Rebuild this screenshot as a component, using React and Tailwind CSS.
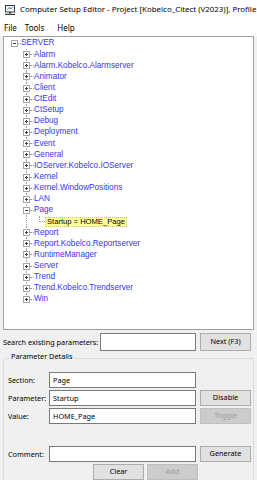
import React from 'react';

const items = [
  'Alarm',
  'Alarm.Kobelco.Alarmserver',
  'Animator',
  'Client',
  'CtEdit',
  'CtSetup',
  'Debug',
  'Deployment',
  'Event',
  'General',
  'IOServer.Kobelco.IOServer',
  'Kernel',
  'Kernel.WindowPositions',
  'LAN',
  'Page',
  'Report',
  'Report.Kobelco.Reportserver',
  'RuntimeManager',
  'Server',
  'Trend',
  'Trend.Kobelco.Trendserver',
  'Win',
];

const ExpandBox = ({ open }) => (
  <div className="relative z-10 w-[7px] h-[7px] border border-[#a5a5a5] bg-white flex items-center justify-center">
    <div className="absolute w-[3px] h-px bg-[#3b3b3b]" />
    {!open && <div className="absolute w-px h-[3px] bg-[#3b3b3b]" />}
  </div>
);

const TreeRow = ({ label, open, last }) => (
  <div className="flex items-center h-[11.13px]">
    <div className="w-[19px] shrink-0" />
    <div className="relative w-[7px] h-full flex items-center shrink-0">
      <div
        className={`absolute left-[3px] top-0 w-0 border-l border-dotted border-[#a0a0a0] ${
          last ? 'h-1/2' : 'h-full'
        }`}
      />
      <ExpandBox open={open} />
    </div>
    <div className="w-[4px] border-t border-dotted border-[#a0a0a0]" />
    <span className="text-[#3535f2] whitespace-nowrap">{label}</span>
  </div>
);

const Btn = ({ children, disabled }) => (
  <button
    className={`w-[51px] h-[16px] flex items-center justify-center border text-[7.3px] leading-none ${
      disabled
        ? 'bg-[#cccccc] border-[#bfbfbf] text-[#9a9a9a]'
        : 'bg-[#e1e1e1] border-[#adadad] text-black'
    }`}
  >
    {children}
  </button>
);

const Field = ({ label, value, children }) => (
  <div className="flex items-center h-[16px]">
    <span className="w-[41px] shrink-0">{label}</span>
    <div className="w-[147px] h-[16px] border border-[#7a7a7a] bg-white flex items-center px-[3px] shrink-0">
      {value}
    </div>
    <div className="ml-[4px]">{children}</div>
  </div>
);

export default function App() {
  return (
    <div
      className="w-[257px] h-[480px] bg-[#f0f0f0] overflow-hidden flex flex-col text-[7.3px] text-black"
      style={{ fontFamily: '"Noto Sans", "Open Sans", sans-serif' }}
    >
      {/* title bar */}
      <div className="h-[20px] bg-white flex items-center shrink-0 whitespace-nowrap overflow-hidden">
        <svg className="ml-[5px] shrink-0" width="10" height="10" viewBox="0 0 10 10">
          <rect x="0.5" y="0.5" width="9" height="6.5" fill="#f4f4f4" stroke="#3a3a3a" />
          <path d="M2.5 4.5 L4 2.5 L6 4 L7.5 2" fill="none" stroke="#2f6fb0" strokeWidth="0.9" />
          <rect x="4" y="7" width="2" height="1.5" fill="#3a3a3a" />
          <rect x="0" y="8.8" width="10" height="1.2" fill="#3a3a3a" />
        </svg>
        <span className="ml-[5px] text-[7.9px]">
          Computer Setup Editor - Project [Kobelco_Citect (V2023)], Profile
        </span>
      </div>

      {/* menu */}
      <div className="h-[16px] bg-white flex items-center shrink-0 text-[8px]">
        <span className="ml-[4px]">File</span>
        <span className="ml-[8px]">Tools</span>
        <span className="ml-[13px]">Help</span>
      </div>

      {/* tree */}
      <div
        className="ml-[3px] w-[251px] h-[294px] shrink-0 border border-[#a0a0a0] bg-white pt-px overflow-hidden text-[8.2px]"
        style={{ fontFamily: '"Liberation Sans", Arial, sans-serif' }}
      >
        <div className="flex items-center h-[11.13px]">
          <div className="w-[7px] shrink-0" />
          <ExpandBox open />
          <div className="w-[3px] border-t border-dotted border-[#a0a0a0]" />
          <span className="text-[#3535f2]">SERVER</span>
        </div>
        {items.map((it, i) => (
          <React.Fragment key={it}>
            <TreeRow label={it} open={it === 'Page'} last={i === items.length - 1} />
            {it === 'Page' && (
              <div className="flex items-center h-[11.13px]">
                <div className="w-[19px] shrink-0" />
                <div className="relative w-[7px] h-full shrink-0">
                  <div className="absolute left-[3px] top-0 h-full w-0 border-l border-dotted border-[#a0a0a0]" />
                </div>
                <div className="w-[9px] shrink-0" />
                <div className="relative w-[6px] h-full shrink-0">
                  <div className="absolute left-0 top-0 h-1/2 w-full border-l border-b border-dotted border-[#a0a0a0]" />
                </div>
                <span className="px-[1px] h-[10px] flex items-center bg-[#ffff9c] border border-dotted border-[#c8c870] whitespace-nowrap text-[7.6px]">
                  Startup = HOME_Page
                </span>
              </div>
            )}
          </React.Fragment>
        ))}
      </div>

      {/* search */}
      <div className="flex items-center mt-[3px] h-[18px] shrink-0">
        <span className="ml-[3px] w-[97px] whitespace-nowrap">Search existing parameters:</span>
        <div className="w-[96px] h-[18px] border border-[#7a7a7a] bg-white" />
        <div className="ml-[4px]">
          <button className="w-[51px] h-[18px] bg-[#e1e1e1] border border-[#adadad] text-[7.3px] leading-none">
            Next (F3)
          </button>
        </div>
      </div>

      {/* group */}
      <div className="relative ml-[3px] mt-[7px] w-[251px] h-[160px] border border-[#dcdcdc] rounded-[2px] shrink-0 pl-[4px] pt-[13px]">
        <span className="absolute -top-[6px] left-[6px] px-px bg-[#f0f0f0] leading-none">Parameter Details</span>
        <div className="flex flex-col gap-[2px]">
          <Field label="Section:" value="Page" />
          <Field label="Parameter:" value="Startup">
            <Btn>Disable</Btn>
          </Field>
          <Field label="Value:" value="HOME_Page">
            <Btn disabled>Toggle</Btn>
          </Field>
          <div className="h-[18px]" />
          <Field label="Comment:" value="">
            <Btn>Generate</Btn>
          </Field>
          <div className="flex gap-[3px] ml-[85px]">
            <Btn>Clear</Btn>
            <Btn disabled>Add</Btn>
          </div>
        </div>
      </div>
    </div>
  );
}
